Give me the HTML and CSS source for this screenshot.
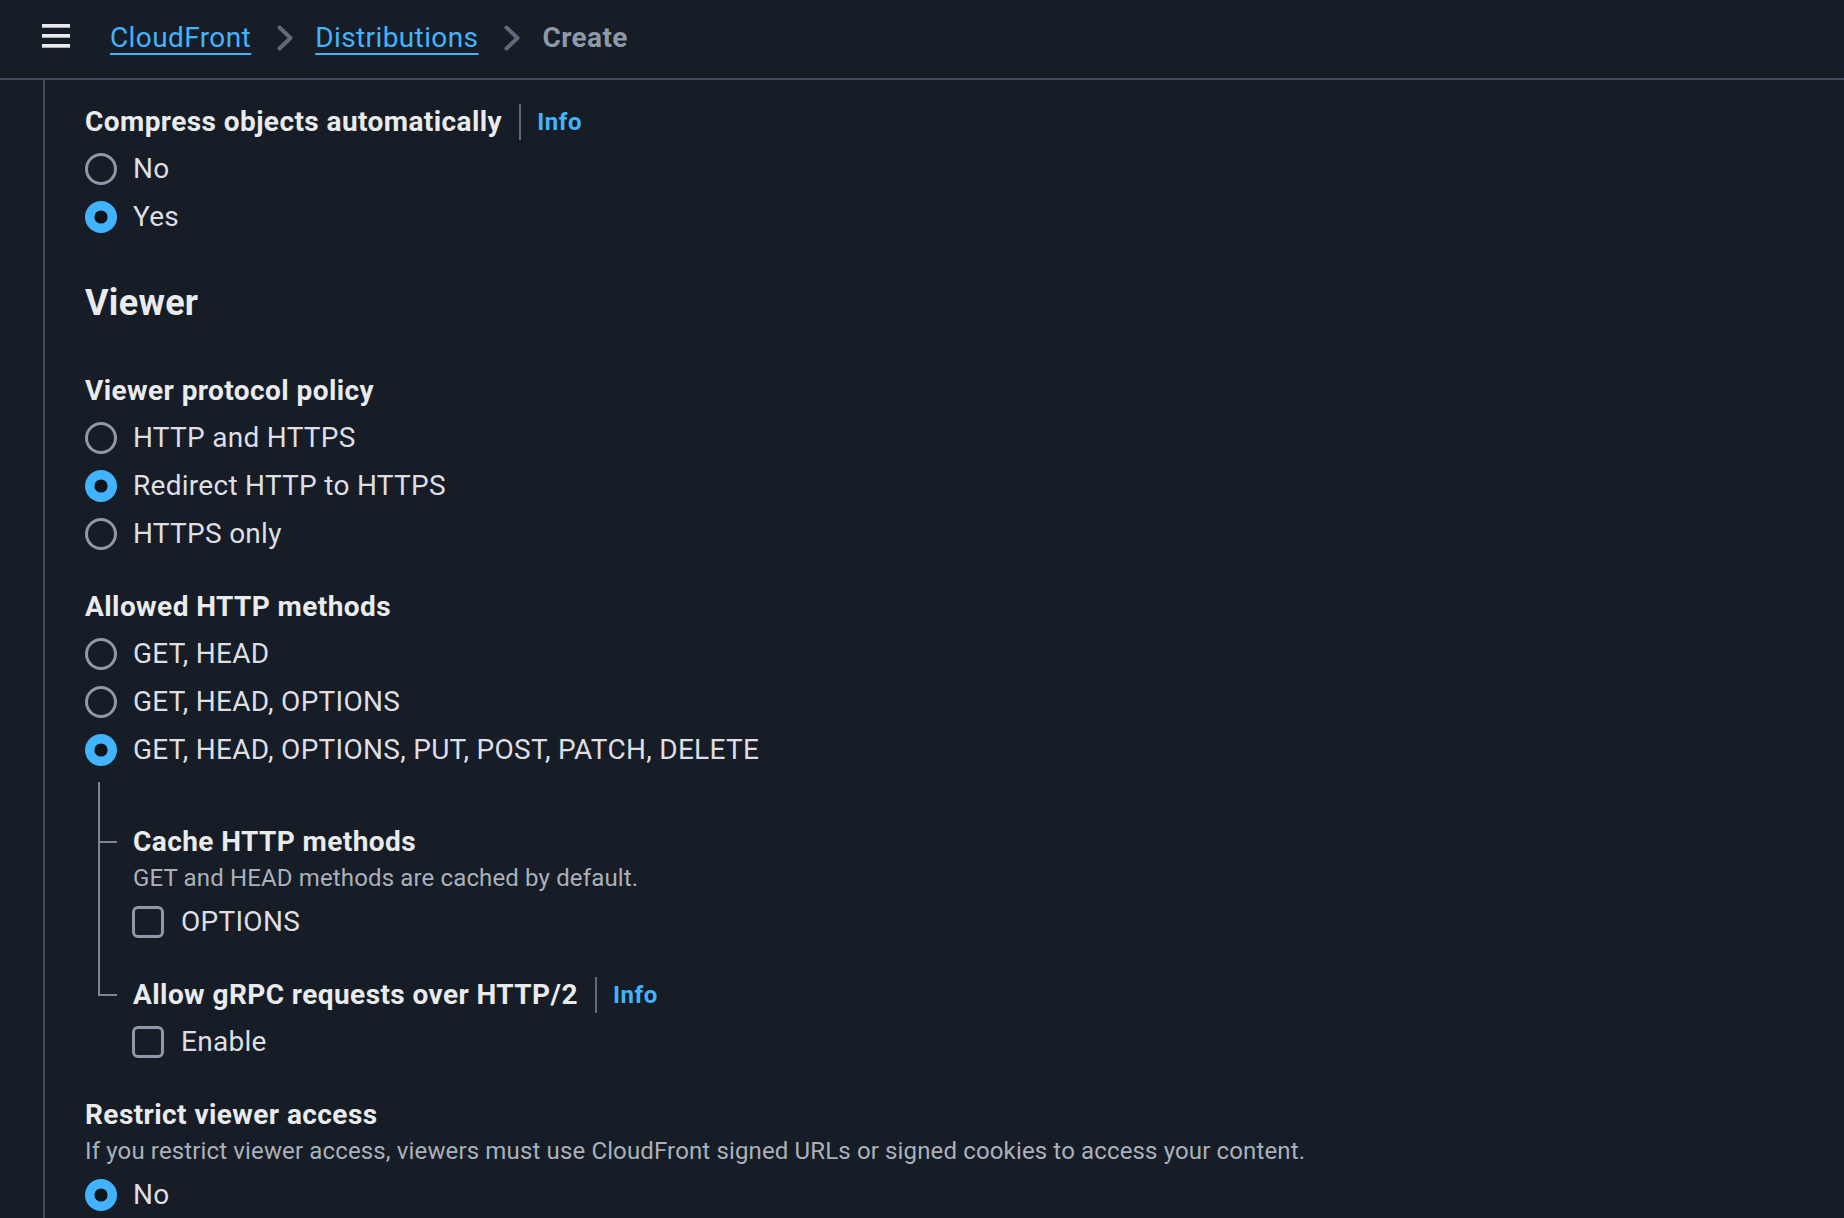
FILE: index.html
```html
<!DOCTYPE html>
<html lang="en">
<head>
<meta charset="utf-8">
<title>CloudFront - Create distribution</title>
<link rel="stylesheet" href="styles.css">
</head>
<body>
<header class="topbar">
  <svg class="menu" width="28" height="24" viewBox="0 0 28 24" aria-hidden="true">
    <rect x="0" y="0" width="28" height="3.7" fill="#e9ebed"/>
    <rect x="0" y="10" width="28" height="3.7" fill="#e9ebed"/>
    <rect x="0" y="20" width="28" height="3.7" fill="#e9ebed"/>
  </svg>
  <nav class="crumbs">
    <a class="crumb-link" href="#">CloudFront</a>
    <svg class="chev" width="16" height="26" viewBox="0 0 16 26" aria-hidden="true"><polyline points="2.5,2.5 13.5,13 2.5,23.5" fill="none" stroke="#5f6b7a" stroke-width="4" stroke-linecap="round" stroke-linejoin="round"/></svg>
    <a class="crumb-link" href="#">Distributions</a>
    <svg class="chev" width="16" height="26" viewBox="0 0 16 26" aria-hidden="true"><polyline points="2.5,2.5 13.5,13 2.5,23.5" fill="none" stroke="#5f6b7a" stroke-width="4" stroke-linecap="round" stroke-linejoin="round"/></svg>
    <span class="crumb-current">Create</span>
  </nav>
</header>

<div class="layout">
  <div class="rail"></div>
  <main class="content">

    <div class="field">
      <div class="label-row">
        <span class="label">Compress objects automatically</span>
        <span class="info-sep"></span>
        <a class="info" href="#">Info</a>
      </div>
      <div class="group">
        <label class="opt"><svg class="radio" width="32" height="32" viewBox="0 0 32 32"><circle cx="16" cy="16" r="14.5" fill="none" stroke="#8d99a8" stroke-width="3"/></svg><span>No</span></label>
        <label class="opt"><svg class="radio" width="32" height="32" viewBox="0 0 32 32"><circle cx="16" cy="16" r="16" fill="#42b4ff"/><circle cx="16" cy="16" r="6.6" fill="#0f141a"/></svg><span>Yes</span></label>
      </div>
    </div>

    <h2 class="heading">Viewer</h2>

    <div class="field field-first">
      <div class="label-row"><span class="label">Viewer protocol policy</span></div>
      <div class="group">
        <label class="opt"><svg class="radio" width="32" height="32" viewBox="0 0 32 32"><circle cx="16" cy="16" r="14.5" fill="none" stroke="#8d99a8" stroke-width="3"/></svg><span>HTTP and HTTPS</span></label>
        <label class="opt"><svg class="radio" width="32" height="32" viewBox="0 0 32 32"><circle cx="16" cy="16" r="16" fill="#42b4ff"/><circle cx="16" cy="16" r="6.6" fill="#0f141a"/></svg><span>Redirect HTTP to HTTPS</span></label>
        <label class="opt"><svg class="radio" width="32" height="32" viewBox="0 0 32 32"><circle cx="16" cy="16" r="14.5" fill="none" stroke="#8d99a8" stroke-width="3"/></svg><span>HTTPS only</span></label>
      </div>
    </div>

    <div class="field field-next">
      <div class="label-row"><span class="label">Allowed HTTP methods</span></div>
      <div class="group">
        <label class="opt"><svg class="radio" width="32" height="32" viewBox="0 0 32 32"><circle cx="16" cy="16" r="14.5" fill="none" stroke="#8d99a8" stroke-width="3"/></svg><span>GET, HEAD</span></label>
        <label class="opt"><svg class="radio" width="32" height="32" viewBox="0 0 32 32"><circle cx="16" cy="16" r="14.5" fill="none" stroke="#8d99a8" stroke-width="3"/></svg><span>GET, HEAD, OPTIONS</span></label>
        <label class="opt"><svg class="radio" width="32" height="32" viewBox="0 0 32 32"><circle cx="16" cy="16" r="16" fill="#42b4ff"/><circle cx="16" cy="16" r="6.6" fill="#0f141a"/></svg><span>GET, HEAD, OPTIONS, PUT, POST, PATCH, DELETE</span></label>
      </div>

      <div class="tree">
        <div class="tree-item tree-first">
          <div class="label-row"><span class="label">Cache HTTP methods</span></div>
          <div class="desc">GET and HEAD methods are cached by default.</div>
          <div class="group group-after-desc">
            <label class="opt"><span class="check"></span><span>OPTIONS</span></label>
          </div>
        </div>
        <div class="tree-item tree-last">
          <div class="label-row">
            <span class="label">Allow gRPC requests over HTTP/2</span>
            <span class="info-sep"></span>
            <a class="info" href="#">Info</a>
          </div>
          <div class="group">
            <label class="opt"><span class="check"></span><span>Enable</span></label>
          </div>
        </div>
      </div>
    </div>

    <div class="field field-next">
      <div class="label-row"><span class="label">Restrict viewer access</span></div>
      <div class="desc">If you restrict viewer access, viewers must use CloudFront signed URLs or signed cookies to access your content.</div>
      <div class="group group-after-desc">
        <label class="opt"><svg class="radio" width="32" height="32" viewBox="0 0 32 32"><circle cx="16" cy="16" r="16" fill="#42b4ff"/><circle cx="16" cy="16" r="6.6" fill="#0f141a"/></svg><span>No</span></label>
      </div>
    </div>

  </main>
</div>
</body>
</html>
```

FILE: styles.css
```css
html, body {
  margin: 0;
  padding: 0;
}

body {
  background: #161d26;
  color: #e9ebed;
  font-family: Roboto, "Liberation Sans", Arial, sans-serif;
  overflow: hidden;
  height: 100vh;
}

/* ---------- top bar ---------- */
.topbar {
  height: 78px;
  border-bottom: 2px solid #414d5c;
  display: flex;
  align-items: center;
  padding-left: 42px;
}

.menu {
  flex: none;
  align-self: flex-start;
  margin-top: 24px;
  margin-right: 40px;
}

.crumbs {
  display: flex;
  align-items: center;
  font-size: 28px;
  line-height: 40px;
  letter-spacing: 0.4px;
  margin-bottom: 3px;
}

.crumb-link {
  color: #42b4ff;
  text-decoration: underline;
  text-decoration-thickness: 2px;
  text-underline-offset: 6px;
}

.chev {
  flex: none;
  margin: 0 22px 0 26px;
}

.crumb-current {
  color: #8d99a8;
  font-weight: 700;
}

/* ---------- layout ---------- */
.layout {
  display: flex;
  min-height: calc(100vh - 80px);
}

.rail {
  flex: none;
  width: 43px;
  border-right: 2px solid #414d5c;
}

.content {
  flex: 1;
  padding: 22px 0 0 40px;
}

/* ---------- form fields ---------- */
.field-first {
  margin-top: 46px;
}

.field-next {
  margin-top: 33px;
}

.label-row {
  display: flex;
  align-items: center;
  height: 40px;
}

.label {
  font-size: 28px;
  line-height: 40px;
  font-weight: 700;
  letter-spacing: 0.42px;
  color: #e9ebed;
}

.info-sep {
  width: 2px;
  height: 36px;
  background: #5f6b7a;
  margin: 0 16px 0 17px;
}

.info {
  color: #42b4ff;
  font-size: 24px;
  line-height: 32px;
  font-weight: 700;
  letter-spacing: 0.6px;
  text-decoration: none;
}

.desc {
  font-size: 24px;
  line-height: 32px;
  letter-spacing: 0.14px;
  color: #aab1bb;
}

.heading {
  margin: 44px 0 0 0;
  font-size: 36px;
  line-height: 44px;
  font-weight: 700;
  letter-spacing: 0.3px;
  color: #e9ebed;
}

.group {
  display: flex;
  flex-direction: column;
  gap: 8px;
  margin-top: 7px;
}

.group-after-desc {
  margin-top: 8px;
}

.opt {
  display: flex;
  align-items: center;
  gap: 16px;
  height: 40px;
  font-size: 28px;
  line-height: 40px;
  letter-spacing: 0.28px;
  color: #dedee3;
}

.radio {
  flex: none;
  display: block;
}

.check {
  flex: none;
  box-sizing: border-box;
  width: 32px;
  height: 32px;
  border: 3px solid #8d99a8;
  border-radius: 6px;
  margin-left: -1px;
  margin-right: 1px;
}

/* ---------- nested tree ---------- */
.tree {
  margin-top: 12px;
  margin-left: 13px;
}

.tree-item {
  position: relative;
  padding-left: 35px;
}

.tree-first {
  padding-top: 40px;
}

.tree-first::before {
  content: "";
  position: absolute;
  left: 0;
  top: 0;
  bottom: 0;
  width: 2px;
  background: #7d8694;
}

.tree-first::after {
  content: "";
  position: absolute;
  left: 0;
  top: 59px;
  width: 19px;
  height: 2px;
  background: #7d8694;
}

.tree-last {
  padding-top: 33px;
}

.tree-last::before {
  content: "";
  position: absolute;
  left: 0;
  top: 0;
  width: 19px;
  height: 54px;
  box-sizing: border-box;
  border-left: 2px solid #7d8694;
  border-bottom: 2px solid #7d8694;
}
```
